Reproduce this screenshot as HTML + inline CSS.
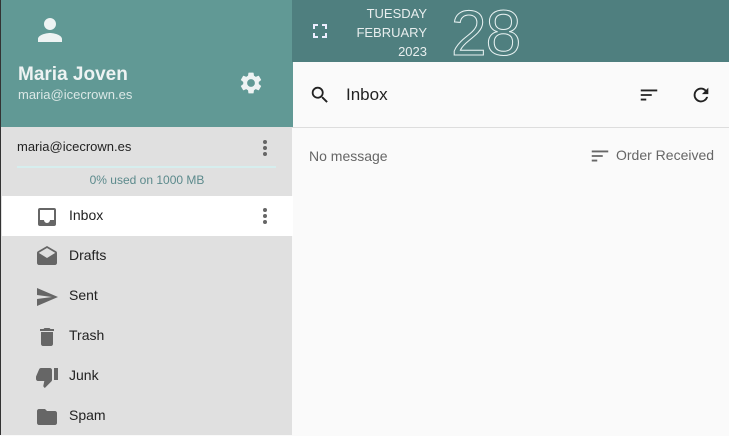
<!DOCTYPE html>
<html><head><style>
*{margin:0;padding:0;box-sizing:border-box}
body{width:729px;height:435px;overflow:hidden;font-family:"Liberation Sans",sans-serif;background:#fafafa;position:relative}
.abs{position:absolute}
#side{left:0;top:0;width:292px;height:435px;background:#e0e0e0;border-left:1px solid #333}
#prof{left:0;top:0;width:292px;height:127px;background:#619995}
.t{position:absolute;white-space:nowrap}
.item{position:absolute;left:1px;width:291px;height:40px}
.item .l{position:absolute;left:67px;top:11px;font-size:14px;color:#222}
.item svg{position:absolute;left:33px;top:9px}
</style></head><body>
<div id="side" class="abs">
<div id="prof" class="abs">
<svg class="abs" style="left:31px;top:12px" width="36" height="36" viewBox="0 0 24 24"><path fill="#eef3f3" d="M12 12c2.2 0 4-1.8 4-4s-1.8-4-4-4-4 1.8-4 4 1.8 4 4 4zm0 2c-2.7 0-8 1.3-8 4v2h16v-2c0-2.7-5.3-4-8-4z"/></svg>
<div class="t" style="left:17px;top:64px;font-size:19px;font-weight:bold;color:#eef3f3">Maria Joven</div>
<div class="t" style="left:17px;top:87px;font-size:13px;color:#dbe8e6">maria@icecrown.es</div>
<svg class="abs" style="left:237px;top:70px" width="26" height="26" viewBox="0 0 24 24"><path fill="#eef3f3" d="M19.14 12.94c.04-.3.06-.61.06-.94 0-.32-.02-.64-.07-.94l2.03-1.58a.49.49 0 0 0 .12-.61l-1.92-3.320a.49.49 0 0 0-.59-.22l-2.39.96c-.5-.38-1.030-.7-1.62-.94l-.36-2.54a.48.48 0 0 0-.48-.41h-3.84c-.24 0-.43.17-.47.41l-.36 2.54c-.59.24-1.13.57-1.62.94l-2.39-.96a.48.48 0 0 0-.59.22L2.74 8.87c-.12.21-.08.47.12.61l2.03 1.58c-.05.3-.09.63-.09.94s.02.64.07.94l-2.03 1.58a.49.49 0 0 0-.12.61l1.92 3.32c.12.22.37.29.59.22l2.39-.96c.5.38 1.03.7 1.62.94l.36 2.54c.05.24.24.41.48.41h3.84c.24 0 .44-.17.47-.41l.36-2.54c.59-.24 1.13-.56 1.62-.94l2.39.96c.22.08.47 0 .59-.22l1.92-3.32c.12-.22.07-.47-.12-.61l-2.01-1.58zM12 15.6A3.6 3.6 0 1 1 12 8.4a3.6 3.6 0 0 1 0 7.2z"/></svg>
</div>
<div class="t" style="left:16px;top:139px;font-size:13px;color:#222">maria@icecrown.es</div>
<div class="abs" style="left:262px;top:140px;width:4px;height:4px;border-radius:2px;background:#666;box-shadow:0 6px 0 #666,0 12px 0 #666"></div>
<div class="abs" style="left:16px;top:166px;width:259px;height:2px;background:#d6eeee"></div>
<div class="t" style="left:0;width:292px;text-align:center;top:173px;font-size:12px;color:#5c8a8c">0% used on 1000 MB</div>
<div class="item" style="top:196px;background:#fff"><svg width="24" height="24" viewBox="0 0 24 24"><path fill="#666" d="M19 3H5a2 2 0 0 0-2 2v14a2 2 0 0 0 2 2h14a2 2 0 0 0 2-2V5a2 2 0 0 0-2-2zm0 12h-4a3 3 0 0 1-6 0H5V5h14v10z"/></svg><div class="l">Inbox</div>
<div class="abs" style="left:261px;top:12px;width:4px;height:4px;border-radius:2px;background:#666;box-shadow:0 6px 0 #666,0 12px 0 #666"></div></div>
<div class="item" style="top:236px"><svg width="24" height="24" viewBox="0 0 24 24"><path fill="#666" d="M21.99 8c0-.72-.37-1.35-.94-1.7L12 1 2.95 6.3C2.38 6.65 2 7.28 2 8v10c0 1.1.9 2 2 2h16c1.1 0 2-.9 2-2l-.01-10zM12 13L3.74 7.84 12 3l8.26 4.84L12 13z"/></svg><div class="l">Drafts</div></div>
<div class="item" style="top:276px"><svg width="24" height="24" viewBox="0 0 24 24"><path fill="#666" d="M2.01 21L23 12 2.01 3 2 10l15 2-15 2z"/></svg><div class="l">Sent</div></div>
<div class="item" style="top:316px"><svg width="24" height="24" viewBox="0 0 24 24"><path fill="#666" d="M6 19c0 1.1.9 2 2 2h8c1.1 0 2-.9 2-2V7H6v12zM19 4h-3.5l-1-1h-5l-1 1H5v2h14V4z"/></svg><div class="l">Trash</div></div>
<div class="item" style="top:356px"><svg width="24" height="24" viewBox="0 0 24 24"><path fill="#666" d="M15 3H6c-.83 0-1.54.5-1.84 1.22l-3.02 7.05c-.09.23-.14.47-.14.73v2c0 1.1.9 2 2 2h6.31l-.95 4.57-.03.32c0 .41.17.79.44 1.06L9.83 23l6.59-6.59c.36-.36.58-.86.58-1.41V5c0-1.1-.9-2-2-2zm4 0v12h4V3h-4z"/></svg><div class="l">Junk</div></div>
<div class="item" style="top:396px"><svg width="24" height="24" viewBox="0 0 24 24"><path fill="#666" d="M10 4H4c-1.1 0-2 .9-2 2v12c0 1.1.9 2 2 2h16c1.1 0 2-.9 2-2V8c0-1.1-.9-2-2-2h-8l-2-2z"/></svg><div class="l">Spam</div></div>
</div>
<div class="abs" style="left:292px;top:0;width:437px;height:62px;background:#4f7f7f"></div>
<svg class="abs" style="left:312px;top:23px" width="16" height="16" viewBox="0 0 16 16"><path fill="none" stroke="#eef" stroke-width="2" d="M2 6V2h4M10 2h4v4M14 10v4h-4M6 14H2v-4"/></svg>
<div class="t" style="left:340px;width:87px;text-align:right;top:4px;font-size:13px;line-height:19px;color:#e8eeee">TUESDAY<br>FEBRUARY<br>2023</div>
<div class="t" style="left:451px;top:-4px;font-size:64px;color:transparent;-webkit-text-stroke:1px #e8f2f2;letter-spacing:-1px">28</div>
<svg class="abs" style="left:309px;top:84px" width="22" height="22" viewBox="0 0 24 24"><path fill="#222" d="M15.5 14h-.79l-.28-.27A6.47 6.47 0 0 0 16 9.5 6.5 6.5 0 1 0 9.5 16c1.61 0 3.09-.59 4.23-1.57l.27.28v.79l5 4.99L20.490 19l-4.99-5zm-6 0C7.01 14 5 11.99 5 9.5S7.01 5 9.5 5 14 7.01 14 9.5 11.99 14 9.5 14z"/></svg>
<div class="t" style="left:346px;top:85px;font-size:17px;color:#222">Inbox</div>
<svg class="abs" style="left:638px;top:84px" width="22" height="22" viewBox="0 0 24 24"><path fill="#222" d="M3 18h6v-2H3v2zM3 6v2h18V6H3zm0 7h12v-2H3v2z"/></svg>
<svg class="abs" style="left:690px;top:84px" width="22" height="22" viewBox="0 0 24 24"><path fill="#222" d="M17.65 6.35A7.958 7.958 0 0 0 12 4a8 8 0 1 0 7.73 10h-2.08A6 6 0 1 1 12 6c1.66 0 3.14.69 4.22 1.78L13 11h7V4l-2.35 2.35z"/></svg>
<div class="abs" style="left:292px;top:127px;width:437px;height:1px;background:#ddd"></div>
<div class="t" style="left:309px;top:148px;font-size:14px;color:#666">No message</div>
<svg class="abs" style="left:589px;top:145px" width="22" height="22" viewBox="0 0 24 24"><path fill="#666" d="M3 18h6v-2H3v2zM3 6v2h18V6H3zm0 7h12v-2H3v2z"/></svg>
<div class="t" style="left:616px;top:147px;font-size:14px;color:#666">Order Received</div>
</body></html>
